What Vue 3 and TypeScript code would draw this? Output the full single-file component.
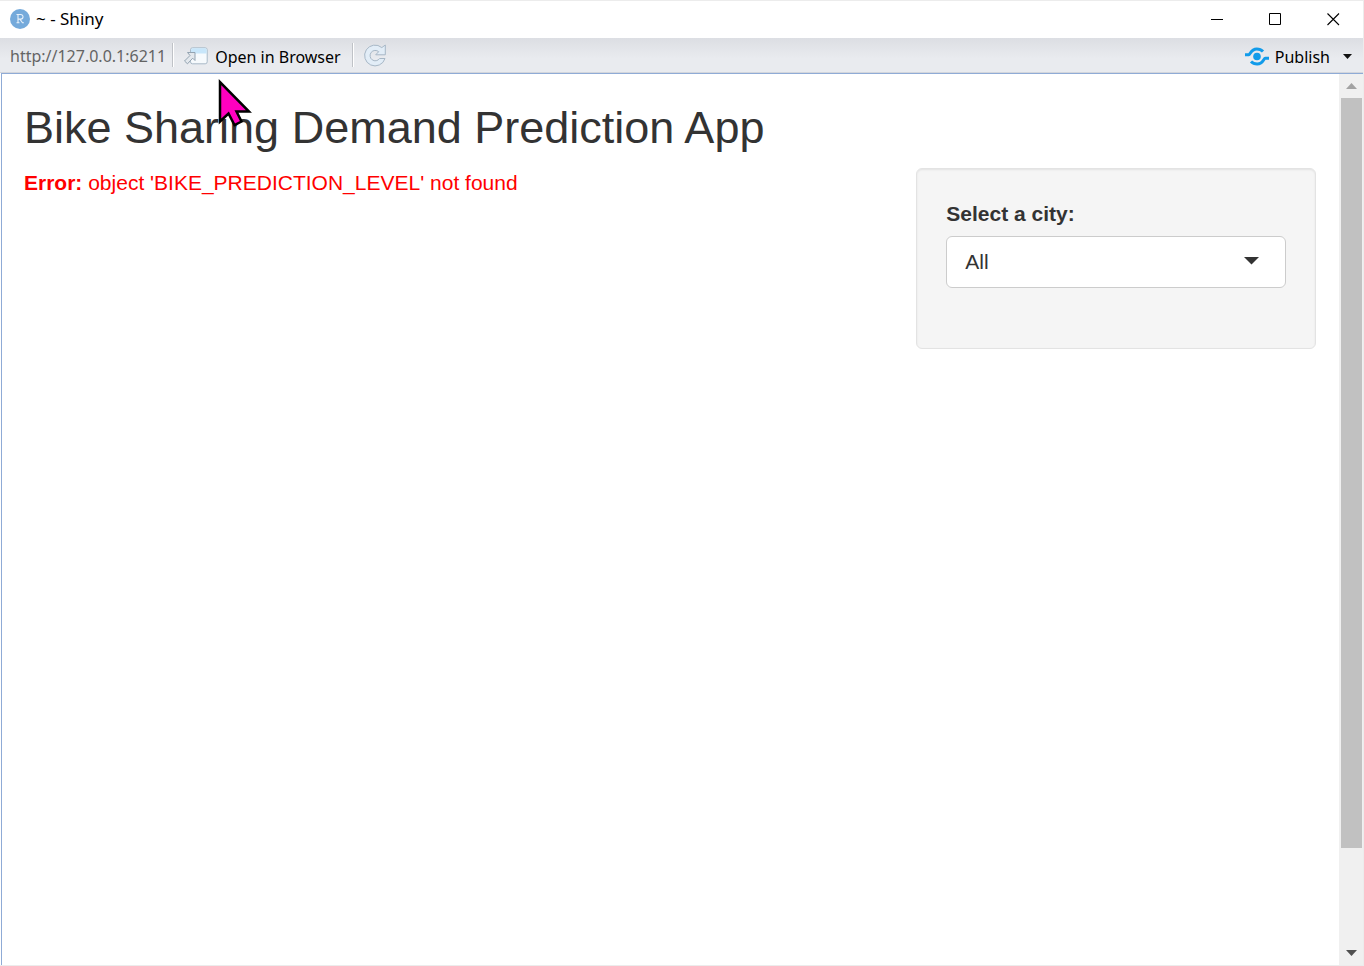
<script setup lang="ts">
import { ref } from 'vue'

const cities: string[] = ['All']
const city = ref<string>('All')
const address = 'http://127.0.0.1:6211'
</script>

<template>
  <div class="window">
    <header class="titlebar">
      <svg class="logo" width="20" height="20" viewBox="0 0 20 20" aria-hidden="true">
        <circle cx="10" cy="10" r="10" fill="#75aadb" />
        <path d="M6.5 5.5h4.2a2.2 2.2 0 0 1 0 4.6H8M8 5.5v8.3M6.5 13.8h3M9.9 10.1l2.6 3.7h1.4" fill="none" stroke="#e8f1fa" stroke-width="1.1" />
      </svg>
      <span class="caption">~ - Shiny</span>
      <div class="controls">
        <button type="button" aria-label="Minimize">
          <svg width="13" height="13" viewBox="0 0 13 13"><path d="M0 6.5h12" stroke="#000" /></svg>
        </button>
        <button type="button" aria-label="Maximize">
          <svg width="13" height="13" viewBox="0 0 13 13"><path d="M.5 .5h11v11H.5z" fill="none" stroke="#000" /></svg>
        </button>
        <button type="button" aria-label="Close">
          <svg width="13" height="13" viewBox="0 0 13 13"><path d="M.5 .5l11.5 11.5M12 .5L.5 12" stroke="#000" stroke-width="1.1" /></svg>
        </button>
      </div>
    </header>

    <nav class="toolbar">
      <span class="address">{{ address }}</span>
      <span class="divider"></span>
      <button type="button" class="tool open">
        <svg width="24" height="18" viewBox="0 0 24 18" aria-hidden="true">
          <rect x="6.5" y=".8" width="16.7" height="16" rx="2" fill="#f6fafd" stroke="#a9bac8" />
          <path d="M7 6.500V3a1.7 1.7 0 0 1 1.7-1.700H21A1.700 1.700 0 0 1 22.700 3v3.500z" fill="#c8e6fa" />
          <path d="M3.500 5.500h7.500v8l-2.300-2.300-5.200 5.600-3-2.800 5.500-5.500z" fill="#e3e8ed" stroke="#93a3b1" />
        </svg>
        <span>Open in Browser</span>
      </button>
      <span class="divider"></span>
      <button type="button" class="tool reload" aria-label="Reload">
        <svg width="22" height="23" viewBox="0 0 22 23" aria-hidden="true">
          <path d="M17.800 3.600L21.300 1v9.800h-9.600l3-3.100A5.200 5.200 0 1 0 15.600 14.500H21A10.400 10.400 0 1 1 17.800 3.600z" fill="#e2edf7" stroke="#a7b7c6" stroke-linejoin="round" />
        </svg>
      </button>
      <button type="button" class="tool publish">
        <svg width="24" height="19" viewBox="0 0 24 19" aria-hidden="true">
          <circle cx="12" cy="9.500" r="3.800" fill="#119bea" />
          <path d="M0 7.800h3.800c1.500 0 2-5.800 8-5.800 2.600 0 4.500.7 6.200 2.500M24 11.200h-3.800c-1.500 0-2 5.800-8 5.800-2.600 0-4.500-.7-6.200-2.500" fill="none" stroke="#119bea" stroke-width="3" />
        </svg>
        <span>Publish</span>
      </button>
      <button type="button" class="tool more" aria-label="Publish options">
        <svg width="10" height="5" viewBox="0 0 10 5"><path d="M0 0h9L4.500 5z" fill="#111" /></svg>
      </button>
    </nav>

    <div class="viewport">
      <main class="page">
        <h2>Bike Sharing Demand Prediction App</h2>
        <div class="row">
          <section class="output">
            <p class="error"><strong>Error:</strong> object 'BIKE_PREDICTION_LEVEL' not found</p>
          </section>
          <aside class="side">
            <form class="well" @submit.prevent>
              <label for="city">Select a city:</label>
              <div class="field">
                <select id="city" v-model="city">
                  <option v-for="name in cities" :key="name" :value="name">{{ name }}</option>
                </select>
                <svg class="caret" width="15" height="8" viewBox="0 0 15 8" aria-hidden="true"><path d="M0 0h15L7.500 7.500z" fill="#333" /></svg>
              </div>
            </form>
          </aside>
        </div>
      </main>
      <div class="scrollbar" aria-hidden="true">
        <svg width="11" height="6" viewBox="0 0 11 6"><path d="M0 6h11L5.500 0z" fill="#a3a3a3" /></svg>
        <div class="track"><div class="thumb"></div></div>
        <svg width="11" height="6" viewBox="0 0 11 6"><path d="M0 0h11L5.500 6z" fill="#505050" /></svg>
      </div>
    </div>

    <svg class="pointer" width="36" height="50" viewBox="0 0 36 50" aria-hidden="true">
      <path d="M2 4v39.500l8.500-8L16.500 47l7-3.500L18.500 33.500H31z" fill="#ff00bf" stroke="#000" stroke-width="2.500" />
    </svg>
  </div>
</template>

<style>
body {
  margin: 0;
}
</style>

<style scoped>
.window {
  position: relative;
  box-sizing: border-box;
  display: flex;
  flex-direction: column;
  min-height: 100vh;
  border: 1px solid #ececec;
  border-left: 0;
  background: #fff;
  font-family: "Noto Sans", "Open Sans", sans-serif;
  font-size: 16px;
  color: #000;
}
button {
  margin: 0;
  padding: 0;
  border: 0;
  background: none;
  font: inherit;
  color: inherit;
}
svg {
  display: block;
  flex: none;
}
.titlebar {
  display: flex;
  align-items: center;
  height: 37px;
  padding: 0 1px 0 10px;
}
.logo {
  margin-bottom: 1px;
}
.caption {
  margin-left: 6px;
  padding-bottom: 2px;
  font-size: 17px;
}
.controls {
  display: flex;
  margin-left: auto;
}
.controls button {
  display: grid;
  place-items: center;
  width: 58px;
  height: 36px;
}
.toolbar {
  box-sizing: border-box;
  display: flex;
  align-items: center;
  height: 35px;
  padding: 0 10px;
  border-bottom: 1px solid #d3d6dc;
  background: linear-gradient(#dcdee3, #e9ebef 60%);
  white-space: nowrap;
}
.address {
  margin-right: 6px;
  padding-top: 2px;
  color: #646464;
}
.divider {
  width: 1px;
  height: 24px;
  margin-right: 10px;
  border-right: 1px solid #fff;
  background: #bfc2c7;
}
.tool {
  display: flex;
  align-items: center;
  gap: 7px;
  padding-top: 4px;
}
.tool svg {
  margin-bottom: 2px;
}
.open {
  margin-right: 11px;
}
.reload {
  padding-top: 2px;
}
.publish {
  gap: 6px;
  margin-left: auto;
}
.more {
  margin-left: 13px;
}
.viewport {
  flex: 1;
  display: flex;
  margin-left: 1px;
  border-top: 1px solid #8fabd6;
  border-left: 1px solid #8fabd6;
}
.page {
  flex: 1;
  min-width: 0;
  font-family: "Liberation Sans", Arial, sans-serif;
  font-size: 21px;
  line-height: 30px;
  color: #333;
}
h2 {
  margin: 29px 22px 15px;
  font-size: 45px;
  font-weight: 400;
  line-height: 50px;
}
.row {
  display: grid;
  grid-template-columns: 2fr 1fr;
}
.output,
.side {
  min-width: 0;
}
.output {
  padding: 0 22px;
}
.side {
  padding: 0 23px;
}
.error {
  margin: 0;
  color: #f00;
}
.well {
  padding: 30px 29px 60px;
  border: 1px solid #e3e3e3;
  border-radius: 6px;
  background: #f5f5f5;
  box-shadow: inset 0 1px 2px rgba(0, 0, 0, 0.08);
}
label {
  display: block;
  margin-bottom: 7px;
  font-weight: 700;
}
.field {
  position: relative;
}
select {
  display: block;
  box-sizing: border-box;
  width: 100%;
  height: 52px;
  padding: 0 18px;
  border: 1px solid #ccc;
  border-radius: 6px;
  appearance: none;
  background: #fff;
  font: inherit;
  color: #333;
}
.caret {
  position: absolute;
  top: 21px;
  right: 27px;
  pointer-events: none;
}
.scrollbar {
  box-sizing: border-box;
  display: flex;
  flex-direction: column;
  align-items: center;
  gap: 9px;
  width: 24px;
  padding: 9px 1px 9px 2px;
  background: #f0f0f0;
}
.track {
  flex: 1;
  width: 100%;
}
.thumb {
  height: 89%;
  background: #c1c1c1;
}
.pointer {
  position: absolute;
  top: 77px;
  left: 218px;
  pointer-events: none;
}
</style>
